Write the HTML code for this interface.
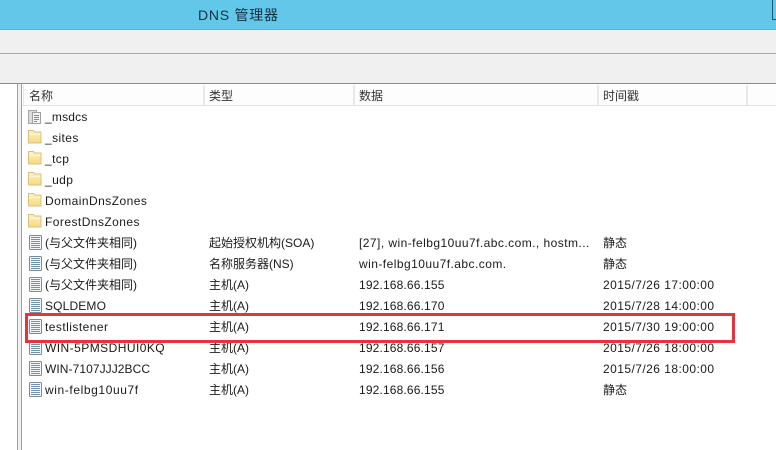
<!DOCTYPE html>
<html><head><meta charset="utf-8">
<style>
html,body{margin:0;padding:0;background:#fff}
#p{position:relative;width:776px;height:450px;overflow:hidden;background:#fff;font:12px/16px "Liberation Sans","Noto Sans CJK SC",sans-serif;color:#1a1a1a}
#p div{position:absolute}
.t{white-space:nowrap;height:16px}
.h{color:#333}
.a{letter-spacing:.45px}
.n{letter-spacing:.15px}
svg{position:absolute;left:0;top:0}
</style></head><body><div id="p">
<div style="left:0;top:0;width:776px;height:29px;background:#62c7e9"></div>
<div style="left:0;top:29px;width:776px;height:1px;background:#7fa6b5"></div>
<div style="left:0;top:30px;width:776px;height:53px;background:#f0f0f0"></div>
<div style="left:0;top:53px;width:776px;height:1px;background:#a8a8a8"></div>
<div style="left:0;top:83px;width:776px;height:1px;background:#8a8a8a"></div>
<div style="left:17px;top:84px;width:5px;height:366px;background:#f0f0f0;border-left:1px solid #a0a0a0;border-right:1px solid #a0a0a0;box-sizing:border-box"></div>
<div style="left:198px;top:6px;font-size:14px;line-height:18px;color:#15303f;white-space:nowrap;letter-spacing:.75px">DNS 管理器</div>
<div style="left:772px;top:0;width:4px;height:20px;box-sizing:border-box;border:1px solid #1d5a78;border-right:0;border-top:0"></div>

<div style="left:22px;top:85px;width:754px;height:21px;background:#fdfdfd;border-bottom:1px solid #e3e3e3;box-sizing:border-box"></div>
<div style="left:23px;top:85px;width:1px;height:20px;background:#e8e8e8"></div>
<div style="left:203px;top:85px;width:2px;height:20px;background:#e8e8e8"></div>
<div style="left:353px;top:85px;width:2px;height:20px;background:#e8e8e8"></div>
<div style="left:597px;top:85px;width:2px;height:20px;background:#e8e8e8"></div>
<div style="left:746px;top:85px;width:2px;height:20px;background:#e8e8e8"></div>
<div class="t h" style="left:29px;top:88px">名称</div>
<div class="t h" style="left:209px;top:88px">类型</div>
<div class="t h" style="left:359px;top:88px">数据</div>
<div class="t h" style="left:603px;top:88px">时间戳</div>

<svg width="776" height="450" viewBox="0 0 776 450">
<defs>
<linearGradient id="f" x1="0" y1="0" x2="0" y2="1"><stop offset="0" stop-color="#fdf3c4"/><stop offset="1" stop-color="#f5d97e"/></linearGradient>
<g id="folder"><path d="M.5 1.500h5l1 1.500h6.500v11h-12.500z" fill="url(#f)" stroke="#d8c17e"/><path d="M1.500 5.500h11" stroke="#fff6d2"/></g>
<g id="rec"><rect x=".5" y=".5" width="12" height="14" rx="1" fill="#f4f7f9" stroke="#7b8b97"/><path d="M2 2.500h9M2 4.500h9M2 6.500h9M2 8.500h9M2 10.500h9M2 12.500h9" stroke="#6f93ad" stroke-width="1"/></g>
<g id="zone"><rect x=".5" y="1.500" width="8" height="13" fill="#dcdcdc" stroke="#a5a5a5"/><rect x="4.500" y="3.500" width="8" height="11" fill="#f4f4f4" stroke="#a0a0a0"/><path d="M6 6.500h5M6 8.500h5M6 10.500h5M6 12.500h3" stroke="#8a8a8a"/></g>
</defs>
<use href="#zone" x="28" y="109"/>
<use href="#folder" x="28" y="129"/>
<use href="#folder" x="28" y="150"/>
<use href="#folder" x="28" y="171"/>
<use href="#folder" x="28" y="192"/>
<use href="#folder" x="28" y="213"/>
<use href="#rec" x="29" y="235"/>
<use href="#rec" x="29" y="256"/>
<use href="#rec" x="29" y="277"/>
<use href="#rec" x="29" y="298"/>
<use href="#rec" x="29" y="319"/>
<use href="#rec" x="29" y="340"/>
<use href="#rec" x="29" y="361"/>
<use href="#rec" x="29" y="382"/>
</svg>

<div class="t" style="left:45px;top:109px;letter-spacing:.2px">_msdcs</div>
<div class="t" style="left:45px;top:130px;letter-spacing:.4px">_sites</div>
<div class="t" style="left:45px;top:151px;letter-spacing:.4px">_tcp</div>
<div class="t" style="left:45px;top:172px;letter-spacing:.4px">_udp</div>
<div class="t a" style="left:45px;top:193px">DomainDnsZones</div>
<div class="t a" style="left:45px;top:214px">ForestDnsZones</div>

<div class="t" style="left:45px;top:235px">(与父文件夹相同)</div>
<div class="t" style="left:209px;top:235px">起始授权机构(SOA)</div>
<div class="t a" style="left:359px;top:235px">[27], win-felbg10uu7f.abc.com., hostm...</div>
<div class="t" style="left:603px;top:235px">静态</div>

<div class="t" style="left:45px;top:256px">(与父文件夹相同)</div>
<div class="t" style="left:209px;top:256px">名称服务器(NS)</div>
<div class="t a" style="left:359px;top:256px">win-felbg10uu7f.abc.com.</div>
<div class="t" style="left:603px;top:256px">静态</div>

<div class="t" style="left:45px;top:277px">(与父文件夹相同)</div>
<div class="t" style="left:209px;top:277px">主机(A)</div>
<div class="t n" style="left:359px;top:277px">192.168.66.155</div>
<div class="t a" style="left:603px;top:277px">2015/7/26 17:00:00</div>

<div class="t" style="left:45px;top:298px;letter-spacing:.15px">SQLDEMO</div>
<div class="t" style="left:209px;top:298px">主机(A)</div>
<div class="t n" style="left:359px;top:298px">192.168.66.170</div>
<div class="t a" style="left:603px;top:298px">2015/7/28 14:00:00</div>

<div class="t" style="left:45px;top:319px;letter-spacing:.45px">testlistener</div>
<div class="t" style="left:209px;top:319px">主机(A)</div>
<div class="t n" style="left:359px;top:319px">192.168.66.171</div>
<div class="t a" style="left:603px;top:319px">2015/7/30 19:00:00</div>

<div class="t a" style="left:45px;top:340px">WIN-5PMSDHUI0KQ</div>
<div class="t" style="left:209px;top:340px">主机(A)</div>
<div class="t n" style="left:359px;top:340px">192.168.66.157</div>
<div class="t a" style="left:603px;top:340px">2015/7/26 18:00:00</div>

<div class="t" style="left:45px;top:361px;letter-spacing:.07px">WIN-7107JJJ2BCC</div>
<div class="t" style="left:209px;top:361px">主机(A)</div>
<div class="t n" style="left:359px;top:361px">192.168.66.156</div>
<div class="t a" style="left:603px;top:361px">2015/7/26 18:00:00</div>

<div class="t" style="left:45px;top:382px;letter-spacing:.6px">win-felbg10uu7f</div>
<div class="t" style="left:209px;top:382px">主机(A)</div>
<div class="t n" style="left:359px;top:382px">192.168.66.155</div>
<div class="t" style="left:603px;top:382px">静态</div>

<div style="left:25px;top:313px;width:710px;height:30px;box-sizing:border-box;border:3px solid #e8333c"></div>
</div></body></html>
